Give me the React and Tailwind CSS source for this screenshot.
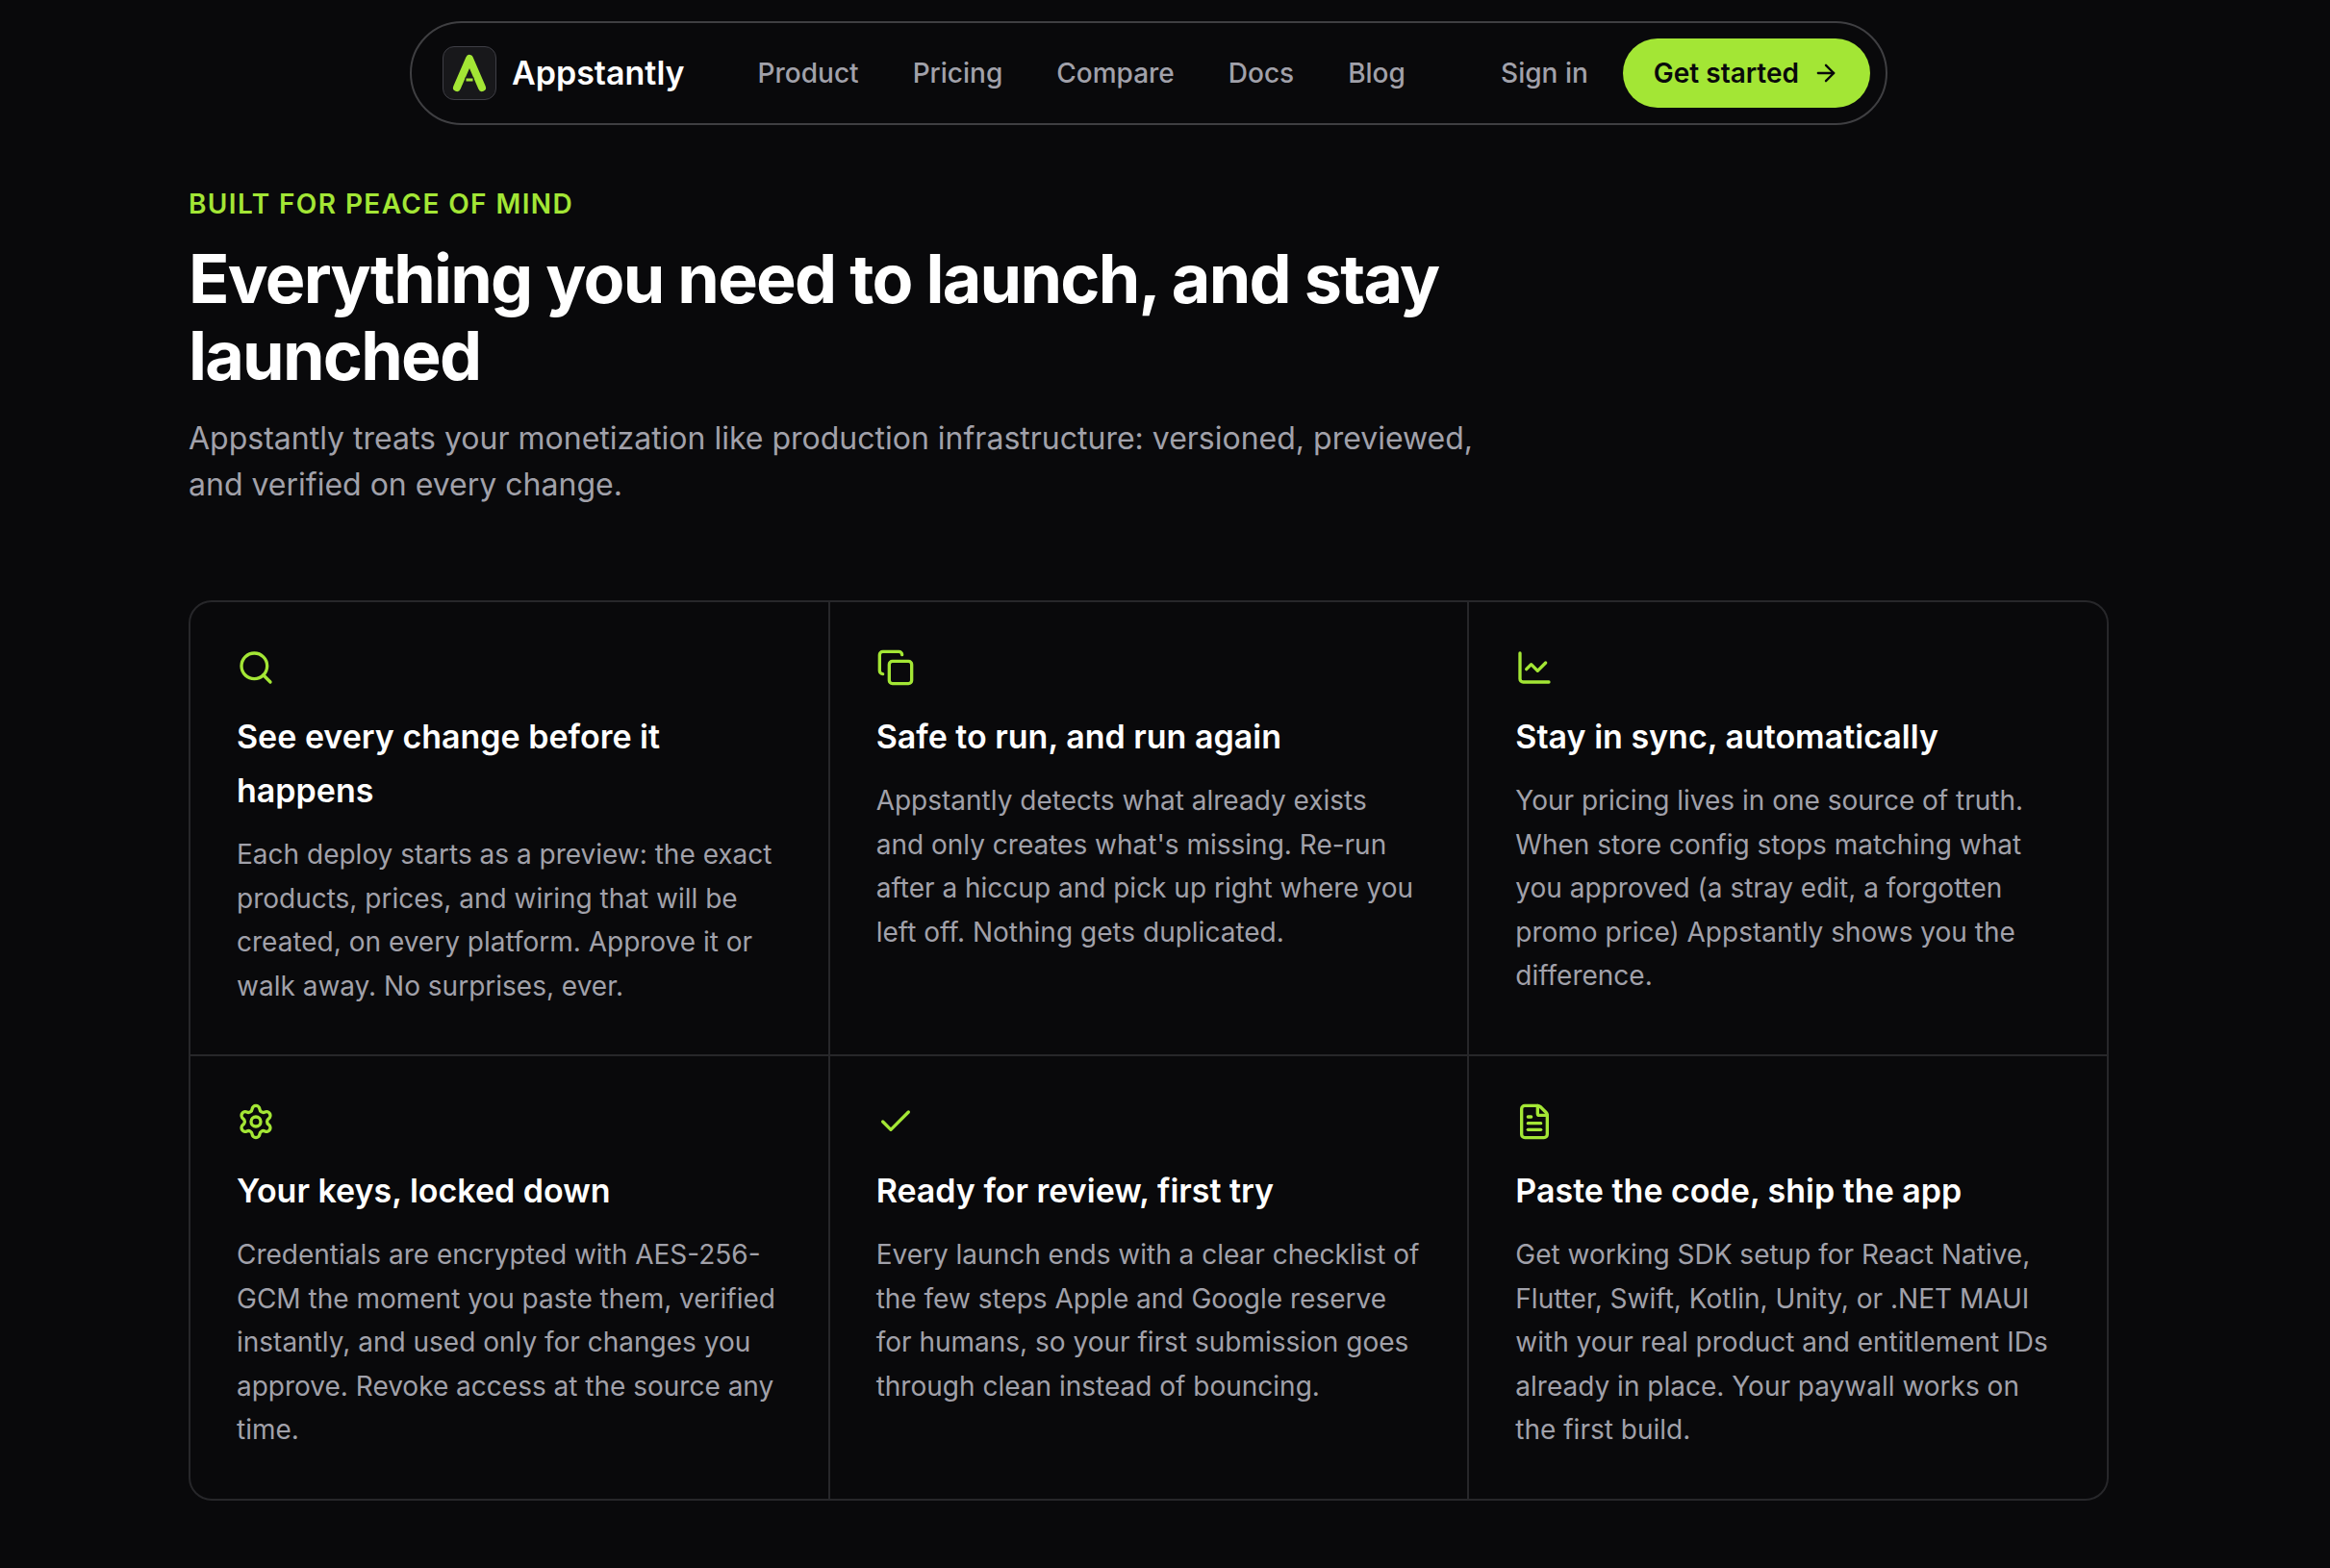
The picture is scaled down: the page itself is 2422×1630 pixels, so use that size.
import React from 'react'
import {
  ArrowRight,
  Check,
  Copy,
  FileText,
  Search,
} from 'lucide-react'

//
// ─── Content ───────────────────────────────────────────────────────
//

const navLinks = ['Product', 'Pricing', 'Compare', 'Docs', 'Blog']

const features = [
  {
    icon: Search,
    title: 'See every change before it happens',
    text: 'Each deploy starts as a preview: the exact products, prices, and wiring that will be created, on every platform. Approve it or walk away. No surprises, ever.',
  },
  {
    icon: Copy,
    title: 'Safe to run, and run again',
    text: "Appstantly detects what already exists and only creates what's missing. Re-run after a hiccup and pick up right where you left off. Nothing gets duplicated.",
  },
  {
    icon: ChartIcon,
    title: 'Stay in sync, automatically',
    text: 'Your pricing lives in one source of truth. When store config stops matching what you approved (a stray edit, a forgotten promo price) Appstantly shows you the difference.',
  },
  {
    icon: GearIcon,
    title: 'Your keys, locked down',
    text: 'Credentials are encrypted with AES-256-GCM the moment you paste them, verified instantly, and used only for changes you approve. Revoke access at the source any time.',
  },
  {
    icon: Check,
    title: 'Ready for review, first try',
    text: 'Every launch ends with a clear checklist of the few steps Apple and Google reserve for humans, so your first submission goes through clean instead of bouncing.',
  },
  {
    icon: FileText,
    title: 'Paste the code, ship the app',
    text: 'Get working SDK setup for React Native, Flutter, Swift, Kotlin, Unity, or .NET MAUI with your real product and entitlement IDs already in place. Your paywall works on the first build.',
  },
]

//
// ─── Icons ─────────────────────────────────────────────────────────
//

function ChartIcon({ className }) {
  return (
    <svg viewBox="0 0 24 24" fill="none" stroke="currentColor" strokeWidth="2" strokeLinecap="round" strokeLinejoin="round" className={className} aria-hidden="true">
      <path d="M3 3v16a2 2 0 0 0 2 2h16" />
      <path d="m7 13 3-3 4 4 5-5" />
    </svg>
  )
}

function GearIcon({ className }) {
  return (
    <svg viewBox="0 0 24 24" fill="none" stroke="currentColor" strokeWidth="2" strokeLinecap="round" strokeLinejoin="round" className={className} aria-hidden="true">
      <path d="M9.671 4.136a2.34 2.34 0 0 1 4.659 0 2.34 2.34 0 0 0 3.319 1.915 2.34 2.34 0 0 1 2.33 4.033 2.34 2.34 0 0 0 0 3.831 2.34 2.34 0 0 1-2.33 4.033 2.34 2.34 0 0 0-3.319 1.915 2.34 2.34 0 0 1-4.659 0 2.34 2.34 0 0 0-3.32-1.915 2.34 2.34 0 0 1-2.33-4.033 2.34 2.34 0 0 0 0-3.831A2.34 2.34 0 0 1 6.35 6.051a2.34 2.34 0 0 0 3.319-1.915" />
      <circle cx="12" cy="12" r="3" />
    </svg>
  )
}

function LogoMark() {
  return (
    <span className="flex size-14 items-center justify-center rounded-xl border border-[#3f3f46] bg-[#18181b]">
      <svg viewBox="0 0 56 56" className="size-14 shrink-0" aria-hidden="true">
        <path d="M15 43 28 13 41 43" fill="none" stroke="#a3e635" strokeWidth="8" strokeLinecap="round" strokeLinejoin="round" />
        <rect x="24" y="33" width="8" height="4" fill="#a3e635" stroke="#18181b" strokeWidth="1" />
      </svg>
    </span>
  )
}

//
// ─── Header ────────────────────────────────────────────────────────
//

function Header() {
  return (
    <header className="mx-auto flex w-full max-w-[1536px] items-center rounded-full border-2 border-[#3f3f42] py-4 pr-4 pl-8 text-[28px] font-medium">
      <a href="#home" className="flex items-center gap-4">
        <LogoMark />
        <span className="text-[34px] leading-10 font-semibold text-white">Appstantly</span>
      </a>
      <nav className="ml-19 flex items-center gap-14 text-[#a1a1aa]">
        {navLinks.map(label => (
          <a key={label} href={`#${label.toLowerCase()}`}>
            {label}
          </a>
        ))}
      </nav>
      <div className="ml-auto flex items-center gap-9">
        <a href="#signin" className="text-[#a1a1aa]">
          Sign in
        </a>
        <button type="button" className="flex h-18 items-center gap-3.5 rounded-full bg-[#a3e635] px-8 font-semibold text-[#09090b]">
          Get started
          <ArrowRight className="size-7" strokeWidth={2} />
        </button>
      </div>
    </header>
  )
}

//
// ─── Feature grid ──────────────────────────────────────────────────
//

function Feature({ icon: Icon, title, text }) {
  return (
    <article className="bg-[#09090b] p-12">
      <Icon className="size-10 text-[#a3e635]" />
      <h3 className="mt-6 text-[34px] leading-14 font-semibold text-white">{title}</h3>
      <p className="mt-4 text-[28px] leading-relaxed text-[#a1a1aa]">{text}</p>
    </article>
  )
}

function App() {
  return (
    <div className="min-h-screen bg-[#09090b] pt-[22px] pr-[34px] pb-16 font-['Inter',sans-serif]">
      <Header />
      <main className="mx-auto mt-15 w-full max-w-[1996px]">
        <div className="max-w-[1344px]">
          <p className="text-[28px] leading-11 font-semibold tracking-wider text-[#a3e635] uppercase">Built for peace of mind</p>
          <h2 className="mt-4 text-[70px] leading-20 font-bold tracking-tight text-white">
            Everything you need to launch, and stay launched
          </h2>
          <p className="mt-[22px] text-[32px] leading-12 text-[#a1a1aa]">
            Appstantly treats your monetization like production infrastructure: versioned, previewed, and verified on every change.
          </p>
        </div>
        <section className="mt-24 grid grid-cols-3 gap-0.5 overflow-hidden rounded-3xl border-2 border-[#27272a] bg-[#27272a]">
          {features.map(feature => (
            <Feature key={feature.title} {...feature} />
          ))}
        </section>
      </main>
    </div>
  )
}

export default App
